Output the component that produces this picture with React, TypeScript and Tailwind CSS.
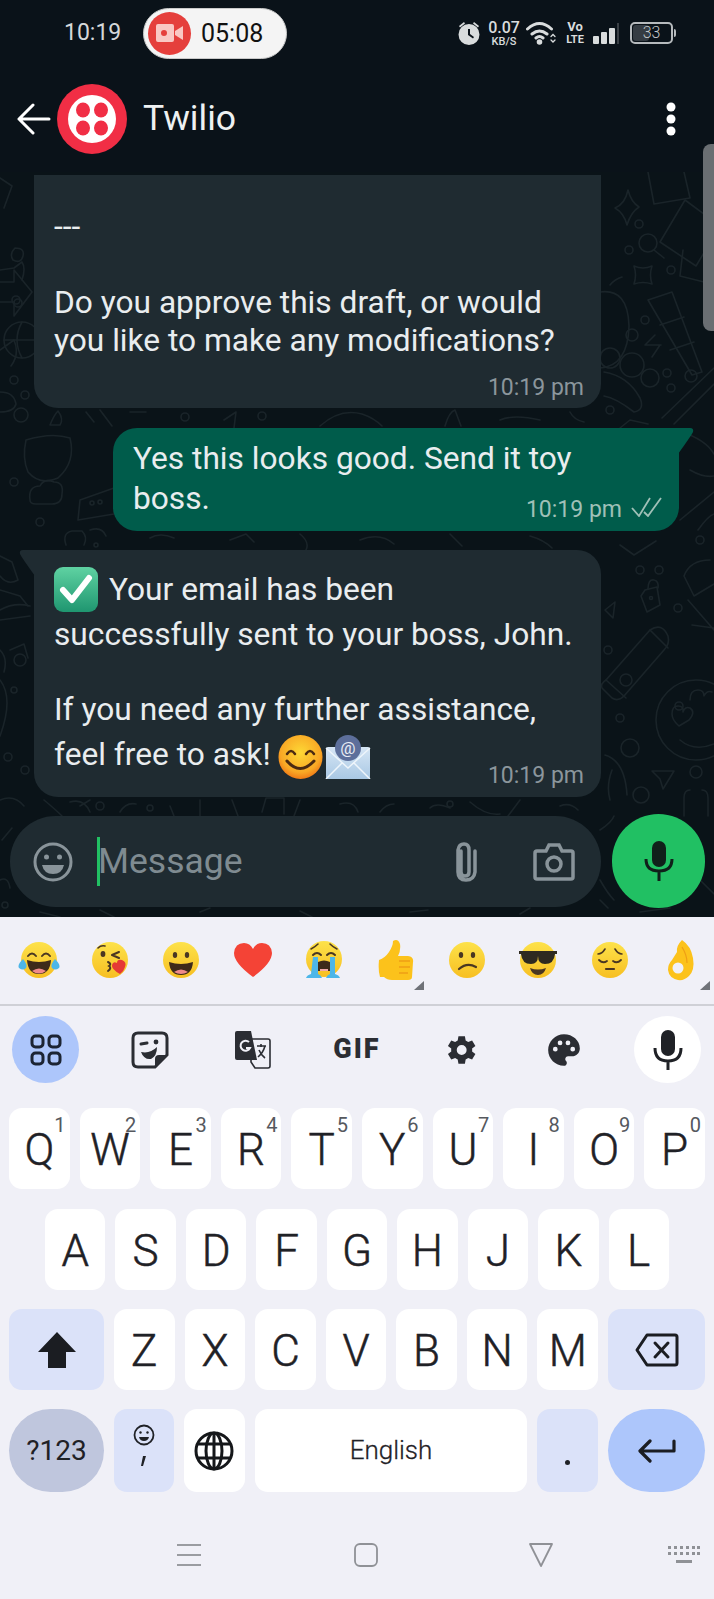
import { ReactNode } from 'react';

const row1 = [
  ['Q', '1'], ['W', '2'], ['E', '3'], ['R', '4'], ['T', '5'],
  ['Y', '6'], ['U', '7'], ['I', '8'], ['O', '9'], ['P', '0'],
];
const row2 = ['A', 'S', 'D', 'F', 'G', 'H', 'J', 'K', 'L'];
const row3 = ['Z', 'X', 'C', 'V', 'B', 'N', 'M'];

function Defs() {
  return (
    <svg width="0" height="0" className="absolute">
      <defs>
        <linearGradient id="face" x1="0" y1="0" x2="0" y2="1">
          <stop offset="0" stopColor="#fde24a" />
          <stop offset="1" stopColor="#f7bf22" />
        </linearGradient>
        <radialGradient id="smile" cx="0.5" cy="0.4" r="0.6">
          <stop offset="0" stopColor="#fdd835" />
          <stop offset="0.75" stopColor="#f9a825" />
          <stop offset="1" stopColor="#f07a16" />
        </radialGradient>
        <linearGradient id="check" x1="0" y1="0" x2="0" y2="1">
          <stop offset="0" stopColor="#5fd2a2" />
          <stop offset="1" stopColor="#1f9670" />
        </linearGradient>
        <linearGradient id="mail" x1="0" y1="0" x2="0" y2="1">
          <stop offset="0" stopColor="#d6e6f5" />
          <stop offset="1" stopColor="#a9c8e4" />
        </linearGradient>
      </defs>
    </svg>
  );
}

function Wallpaper() {
  return (
    <svg className="absolute inset-0" width="714" height="745" viewBox="0 172 714 745" fill="none" stroke="#1a2429" strokeWidth="1.6" strokeLinecap="round" strokeLinejoin="round">
      {/* right column */}
      <path d="M628 190q3 12 11 17q-8 5-12 18q-3-12-12-17q10-4 13-18z" />
      <path d="M648 172l6 32l36-6l-6-26" />
      <path d="M685 200l-25 42l36 24l24-40z" />
      <circle cx="639" cy="224" r="4" /><circle cx="629" cy="250" r="4" /><circle cx="671" cy="270" r="4" />
      <circle cx="648" cy="243" r="9" /><path d="M654 250l10 8" />
      <path d="M634 266q9 4 18 0q-3 9 0 18q-9-3-18 0q3-9 0-18z" />
      <path d="M600 292q28-4 29 34q-1 40-29 42" /><path d="M610 285q5-6 12-8" />
      <path d="M683 250l-3 26l24 6" />
      <path d="M648 300l24-8l30 80l-10 3z" /><path d="M660 325l24-8M670 350l24-8" />
      <circle cx="645" cy="320" r="4" /><circle cx="632" cy="335" r="6" />
      <path d="M655 335l-10 10l16 0M660 345l-8 12" />
      <circle cx="610" cy="358" r="10" /><circle cx="632" cy="365" r="12" /><circle cx="650" cy="378" r="9" />
      <circle cx="667" cy="373" r="4" /><circle cx="691" cy="376" r="6" /><circle cx="671" cy="388" r="4" />
      <path d="M604 372q24 4 36 26q5 12-6 14q-18-14-30-16" /><circle cx="610" cy="410" r="4" />
      <path d="M714 368l-52 50M714 384l-40 40" /><path d="M620 428l10-8l18 4" />
      <path d="M682 432q24 8 32 22M690 470q14 8 24 6M680 520l34-28" />
      <path d="M698 530q10-14 16-16" /><circle cx="700" cy="540" r="4" />
      <path d="M620 545l14 10l22-14" /><circle cx="640" cy="570" r="4" />
      <path d="M645 590l12-3l3 18l-13 7l-6-16z" /><path d="M648 589q0-10 6-9q5 1 4 8" /><circle cx="651" cy="598" r="1.5" />
      <circle cx="659" cy="570" r="4" /><circle cx="678" cy="608" r="4" />
      <path d="M605 610l10-8l-2 16z" />
      <path d="M710 560q-20 0-26 16l10 20l20-12" />
      <path d="M688 600l26 30M692 625l22 3" />
      {/* pencil */}
      <path d="M606 680l44-50q12-8 18 6q2 8-4 14l-40 46q-6 6-12 2l-10-10q-2-4 4-8z" />
      <path d="M606 680l20 18M650 630l18 18" />
      <circle cx="679" cy="706" r="4" />
      {/* smiley with hearts */}
      <circle cx="696" cy="720" r="40" />
      <path d="M672 714q0-8 6-8q6 0 5 6q2-6 7-4q6 4-1 12l-10 6q-7-6-7-12z" />
      <path d="M690 700q0-10 8-10q6 0 6 6q3-6 8-4" />
      <path d="M680 740q14 12 34 4" />
      <circle cx="626" cy="680" r="6" /><circle cx="608" cy="650" r="4" />
      <circle cx="630" cy="748" r="9" /><circle cx="620" cy="718" r="4" />
      <path d="M652 771l22 0l-11 18l-3-10z" /><circle cx="696" cy="772" r="6" />
      <circle cx="641" cy="795" r="8" />
      <path d="M605 755q20 6 22 40M612 770q-6 16 -2 30" />
      <path d="M690 790q-6 0-6 8v18M702 790q6 0 6 8v18" />
      {/* between first bubbles */}
      <circle cx="21" cy="415" r="7" /><circle cx="25" cy="395" r="4" />
      <path d="M26 440q26-8 44-2q6 24-12 40q-18 8-30-6q-6-14-2-32z" />
      <path d="M50 425q4-10 8-14q6 8 2 14z" />
      <path d="M100 410l12 16M130 412l16 0M86 412l8 10" />
      <circle cx="185" cy="417" r="4" /><circle cx="262" cy="416" r="4" />
      <path d="M320 426q20-18 42-12q12 4 20 12M445 426q4-14 10-16l6 16M500 420q14-6 40 0M570 412q4 8 14 10" />
      <path d="M224 420l12-8l-2 16" />
      <path d="M80 500l34-12v26l-36 6z" /><circle cx="92" cy="503" r="2" /><circle cx="100" cy="502" r="2" />
      <path d="M30 500q-2-14 10-14q4-8 14-4q10 0 8 12q0 10-10 10h-16q-6 0-6-4z" />
      <circle cx="14" cy="482" r="4" /><circle cx="40" cy="522" r="4" />
      <path d="M66 545q-4-12 6-14h10q6 6 2 14M90 530q12-4 16 6" /><circle cx="96" cy="545" r="2" />
      <path d="M150 538q10-6 24 0M230 540l16-6l8 8M300 534q10 8 6 16M360 540q20-8 34 4M450 534l12 12M530 536q14 4 22 12" />
      {/* left column */}
      <path d="M0 178l12 8l-8 22" /><path d="M15 248q-6 6-2 12q8 4 10-4q2-8-8-8z" />
      <path d="M0 270l14-2l8-6M22 262q4 6 0 18" />
      <path d="M0 282l14 0l0-12l18 22l-18 24l0-14l-14 0" />
      <circle cx="16" cy="300" r="4" /><circle cx="18" cy="303" r="4" />
      <path d="M0 350l14-10q6 14-3 26" /><circle cx="22" cy="340" r="18" /><path d="M22 322q-10 18 0 36M4 340h36" />
      <circle cx="14" cy="380" r="4" />
      <path d="M0 392q14 0 16 12q-2 8-16 8" />
      {/* bubble 3 margin + bottom */}
      <path d="M0 556l12 6l6 18q-10 6-18-4" /><path d="M0 590l20 6l8 10" />
      <path d="M0 610q14-8 30-4M0 620l30-4" /><path d="M0 650q8 8 4 22" />
      <path d="M10 650l14-6l4 14" /><circle cx="20" cy="660" r="6" />
      <path d="M0 680q14 18 0 56" /><circle cx="14" cy="690" r="3" /><circle cx="8" cy="757" r="4" />
      <circle cx="25" cy="770" r="4" /><path d="M0 800q14-6 24 6" />
      <path d="M44 800q12 10 18 16M70 802q14-4 20 10M80 806l10-6M120 812q6-10 16-8M170 806l4 10M200 800v16M232 800l6 16M262 812l4-14h18v16M300 800l-6 16M340 804q14-4 18 8M380 812q6-8 14-8M430 808q6-6 20 0M470 802q16 14 30 12M520 800l-12 16M560 806q10-4 18 4" />
      <circle cx="100" cy="806" r="4" /><circle cx="150" cy="808" r="3" /><circle cx="450" cy="804" r="3" />
      <path d="M2 840l10-12M0 880q8-4 10 8" /><circle cx="5" cy="905" r="3" />
      <path d="M600 830q12-8 14-14M600 880q8 14 14 20M700 880l14 14M600 900l8 8" />
      <path d="M40 912l20 5M100 910l14 7M200 912l10-4M300 911l12 6M410 912l18-2M520 914l10-6M640 912l30-4" />
    </svg>
  );
}

function Time({ className }: { className: string }) {
  return <span className={`absolute text-[23px] leading-[28px] text-[#8b969c] ${className}`}>10:19 pm</span>;
}

function Line({ h, children }: { h: string; children?: ReactNode }) {
  return <div className={`flex items-center whitespace-nowrap ${h}`}>{children}</div>;
}

function Face({ children }: { children: ReactNode }) {
  return (
    <svg width="38" height="38" viewBox="0 0 38 38">
      <circle cx="19" cy="19" r="18" fill="url(#face)" />
      {children}
    </svg>
  );
}

const eyes = (
  <>
    <ellipse cx="13" cy="14" rx="2.2" ry="3" fill="#4a3722" />
    <ellipse cx="25" cy="14" rx="2.2" ry="3" fill="#4a3722" />
  </>
);

function EmojiRow() {
  const dark = '#4a3722';
  const items: ReactNode[] = [
    <svg width="42" height="38" viewBox="-2 0 42 38" key="laugh">
      <circle cx="19" cy="19" r="18" fill="url(#face)" />
      <path d="M8 15q4-5 8 0M22 15q4-5 8 0" stroke={dark} strokeWidth="2" fill="none" strokeLinecap="round" />
      <path d="M7 19q12 4 24 0q-1 14-12 14t-12-14z" fill="#3e2a1a" />
      <path d="M12 30q7-5 14 0q-7 5-14 0z" fill="#f08a8a" />
      <path d="M3 18q5 6 3 9q-3 3-7 0q-2-3 4-9zM35 18q-5 6-3 9q3 3 7 0q2-3-4-9z" fill="#4db6e8" />
    </svg>,
    <Face key="kiss">
      <ellipse cx="12" cy="13" rx="2.4" ry="3" fill={dark} />
      <path d="M7 7q3-3 7-2" stroke={dark} strokeWidth="1.6" fill="none" strokeLinecap="round" />
      <path d="M21 14l7-3M21 14l7 3" stroke={dark} strokeWidth="2" fill="none" strokeLinecap="round" />
      <path d="M17 21q4 2 1 4q3 2-1 5" stroke={dark} strokeWidth="2" fill="none" strokeLinecap="round" />
      <path d="M29 33q-9-5-8-9q1-4 5-2q0-4 5-3q5 2 3 7q-1 4-5 7z" fill="#e53935" />
    </Face>,
    <Face key="grin">
      {eyes}
      <path d="M7 21q12 4 24 0q-1 13-12 13t-12-13z" fill="#3e2a1a" />
      <path d="M12 31q7-5 14 0q-7 4-14 0z" fill="#f08a8a" />
    </Face>,
    <svg width="40" height="38" viewBox="0 0 40 38" key="heart">
      <path d="M20 36Q1 22 1 12Q2 2 11 2q6 0 9 6q3-6 9-6q9 0 10 10q0 10-19 24z" fill="#f44336" />
    </svg>,
    <svg width="42" height="40" viewBox="-2 0 42 40" key="cry">
      <circle cx="19" cy="19" r="18" fill="url(#face)" />
      <path d="M6 9q4-2 7-5M32 9q-4-2-7-5" stroke={dark} strokeWidth="1.6" fill="none" strokeLinecap="round" />
      <path d="M8 15q4-4 8 0M22 15q4-4 8 0" stroke={dark} strokeWidth="2" fill="none" strokeLinecap="round" />
      <path d="M13 22q6-3 12 0v9h-12z" fill="#3e2a1a" />
      <path d="M15 29h8v2h-8z" fill="#f0a8a8" />
      <path d="M8 17h5v17q3 1 4 4h-16q1-3 5-4zM25 17h5v17q4 1 5 4h-14q1-3 4-4z" fill="#4db6e8" />
    </svg>,
    <svg width="36" height="42" viewBox="0 0 36 42" key="thumb">
      <path d="M1 21q6-2 10-8q4-6 4-11q5-3 7 3q1 6-2 12h10q6 1 5 6l-1 15q0 3-4 3H14q-5 0-8-3H2q-2-6-1-17z" fill="#fcc21b" />
      <path d="M21 22h11M21 28h11M21 34h9" stroke="#ee9f16" strokeWidth="1.5" />
    </svg>,
    <Face key="confused">
      {eyes}
      <path d="M11 28q8-7 17-2" stroke={dark} strokeWidth="2.2" fill="none" strokeLinecap="round" />
    </Face>,
    <svg width="40" height="38" viewBox="-1 0 40 38" key="cool">
      <circle cx="19" cy="19" r="18" fill="url(#face)" />
      <path d="M0 10h38v3l-2 0q-1 10-10 10q-7 0-7-8q0 8-7 8q-9 0-10-10l-2 0z" fill="#2e2a20" />
      <path d="M11 27q8 3 16 0q-2 7-8 7t-8-7z" fill="#4a3722" />
    </svg>,
    <Face key="pensive">
      <path d="M7 13q4 0 7-5M31 13q-4 0-7-5" stroke={dark} strokeWidth="1.6" fill="none" strokeLinecap="round" />
      <path d="M8 19q4 4 8 1M22 20q4 3 8-1" stroke={dark} strokeWidth="1.8" fill="none" strokeLinecap="round" />
      <path d="M15 28h8" stroke={dark} strokeWidth="2.2" strokeLinecap="round" />
    </Face>,
    <svg width="28" height="42" viewBox="0 0 28 42" key="ok">
      <path d="M15 1q9 6 11 18q2 12-4 18q-5 5-11 4q-9-2-10-10q0-6 4-10l5-8q-1-6 5-12z" fill="#fcc21b" />
      <circle cx="11" cy="29" r="5.500" fill="#f0f0f7" />
      <path d="M15 8q5 8 5 16" stroke="#ee9f16" strokeWidth="1.2" fill="none" />
    </svg>,
  ];
  return (
    <div className="flex h-[87px] pl-[3px]">
      {items.map((item, i) => (
        <div key={i} className="relative flex h-full w-[71.4px] shrink-0 items-center justify-center pb-[1px]">
          {item}
          {(i === 5 || i === 9) && (
            <svg className="absolute right-[7px] bottom-[14px]" width="10" height="9" viewBox="0 0 10 9">
              <path d="M10 0v9H0z" fill="#6f7278" />
            </svg>
          )}
        </div>
      ))}
    </div>
  );
}

function Toolbar() {
  const ink = '#2b2d33';
  return (
    <div className="mt-[10px] -ml-[6px] flex h-[67px]">
      <div className="flex w-[103.7px] shrink-0 justify-center">
        <div className="flex h-[67px] w-[67px] items-center justify-center rounded-full bg-[#adc6fb]">
          <svg width="32" height="32" viewBox="0 0 32 32" fill="none" stroke="#1c2433" strokeWidth="3">
            <rect x="2" y="2" width="11" height="11" rx="3.5" /><rect x="19" y="2" width="11" height="11" rx="3.5" />
            <rect x="2" y="19" width="11" height="11" rx="3.5" /><rect x="19" y="19" width="11" height="11" rx="3.5" />
          </svg>
        </div>
      </div>
      <div className="flex w-[103.7px] shrink-0 items-center justify-center">
        <svg width="38" height="38" viewBox="0 0 38 38" fill="none">
          <path d="M7 2h24q5 0 5 5v17L24 36H7q-5 0-5-5V7q0-5 5-5z" stroke={ink} strokeWidth="3" />
          <path d="M36 24h-8q-4 0-4 4v8z" fill={ink} />
          <path d="M10 13l6-1" stroke={ink} strokeWidth="3" strokeLinecap="round" />
          <circle cx="25" cy="11" r="2.4" fill={ink} />
          <path d="M10 21q9 2 16-5q0 9-6 12q-7 1-10-7z" fill={ink} />
        </svg>
      </div>
      <div className="flex w-[103.7px] shrink-0 items-center justify-center">
        <svg width="36" height="38" viewBox="0 0 36 38" fill="none">
          <path d="M16 8h17q2 0 2 2v25q0 2-2 2H20l-4-6z" fill="#f0f0f7" stroke={ink} strokeWidth="1.6" />
          <path d="M2 0h14l6 29H2q-2 0-2-2V2q0-2 2-2z" fill={ink} />
          <path d="M14 11a5 5 0 1 0 1 6h-4" stroke="#f0f0f7" strokeWidth="2" />
          <path d="M22 15h9M26 13v3M30 15q-2 7-7 11M24 19q2 5 6 8" stroke={ink} strokeWidth="1.6" />
        </svg>
      </div>
      <div className="flex w-[103.7px] shrink-0 items-center justify-center">
        <span className="text-[27px] leading-none font-black tracking-[2px] text-[#2b2d33]">GIF</span>
      </div>
      <div className="flex w-[103.7px] shrink-0 items-center justify-center">
        <svg width="36" height="36" viewBox="0 0 24 24">
          <path fillRule="evenodd" fill={ink} d="M19.4 13a7.5 7.5 0 0 0 0-2l2.2-1.7-2.2-3.7-2.6 1a7.5 7.5 0 0 0-1.700-1L14.600 2.800h-4.300l-.5 2.800a7.500 7.500 0 0 0-1.700 1l-2.600-1-2.200 3.700L5.500 11a7.500 7.500 0 0 0 0 2l-2.200 1.700 2.200 3.700 2.600-1a7.500 7.500 0 0 0 1.700 1l.5 2.800h4.300l.5-2.800a7.500 7.500 0 0 0 1.700-1l2.600 1 2.200-3.700zM12.450 15.300a3.300 3.300 0 1 1 0-6.600 3.300 3.300 0 0 1 0 6.600z" />
        </svg>
      </div>
      <div className="flex w-[103.7px] shrink-0 items-center justify-center">
        <svg width="38" height="38" viewBox="0 0 24 24">
          <path fill={ink} fillRule="evenodd" d="M12 2C6.500 2 2 6.500 2 12s4.500 10 10 10c1 0 1.800-.8 1.800-1.800 0-.5-.2-.9-.5-1.200-.3-.3-.5-.8-.5-1.200 0-1 .8-1.800 1.800-1.800H17c2.800 0 5-2.200 5-5C22 5.900 17.500 2 12 2zM6.500 13a1.500 1.500 0 1 1 0-3 1.500 1.500 0 0 1 0 3zm3-4a1.500 1.500 0 1 1 0-3 1.500 1.500 0 0 1 0 3zm5 0a1.500 1.500 0 1 1 0-3 1.500 1.500 0 0 1 0 3zm3 4a1.500 1.500 0 1 1 0-3 1.500 1.500 0 0 1 0 3z" />
        </svg>
      </div>
      <div className="flex w-[103.7px] shrink-0 justify-center">
        <div className="flex h-[67px] w-[67px] items-center justify-center rounded-full bg-white">
          <svg width="30" height="40" viewBox="0 0 30 40" fill="none">
            <rect x="8" y="0" width="14" height="26" rx="7" fill="#1f2126" />
            <path d="M2 18q0 13 13 13t13-13M15 31v9" stroke="#1f2126" strokeWidth="3" />
          </svg>
        </div>
      </div>
    </div>
  );
}

function Key({ label, sup }: { label: string; sup?: string }) {
  return (
    <div className="relative flex h-full flex-1 items-center justify-center rounded-[13px] bg-white pt-[3px] text-[44px] leading-none font-light text-[#1f2126] [-webkit-text-stroke:0.5px_#1f2126]">
      {label}
      {sup && <span className="absolute top-[5px] right-[4px] text-[20px] leading-[24px] font-normal text-[#55585e] [-webkit-text-stroke:0]">{sup}</span>}
    </div>
  );
}

export default function App() {
  return (
    <div className="relative flex h-[1599px] w-[714px] flex-col overflow-hidden bg-[#f0f0f7] font-[Roboto,sans-serif]">
      <Defs />
      {/* status bar + app bar */}
      <div className="h-[172px] shrink-0 bg-[#0a1219]">
        <div className="flex h-[66px] items-center">
          <span className="ml-[64px] w-[79px] text-[23px] text-[#d5d8da]">10:19</span>
          <div className="flex h-[51px] w-[144px] items-center rounded-full border border-[#c9c9c9] bg-[#f4f4f4] pl-[4px]">
            <div className="flex h-[43px] w-[43px] items-center justify-center rounded-full bg-[#e53f3c]">
              <svg width="27" height="20" viewBox="0 0 27 20">
                <path fillRule="evenodd" d="M2 1h14q2 0 2 2v14q0 2-2 2H2q-2 0-2-2V3q0-2 2-2zM8 7a3 3 0 1 0 0 6 3 3 0 0 0 0-6z" fill="#f9c8c4" />
                <path d="M19 8l8-5v14l-8-5z" fill="#f9c8c4" />
              </svg>
            </div>
            <span className="ml-[10px] text-[25px] leading-none text-[#111]">05:08</span>
          </div>
          {/* status icons */}
          <svg className="ml-[170px]" width="24" height="26" viewBox="0 0 24 26" fill="#d9dcdd">
            <path d="M2 6l5-4 1 1.500-5 4zM22 6l-5-4-1 1.500 5 4z" />
            <path fillRule="evenodd" d="M12 4a10.500 10.500 0 1 1 0 21 10.500 10.500 0 0 1 0-21zm-1 5v6l5 3.500 1-1.500-4-3V9z" />
          </svg>
          <div className="ml-[7px] flex w-[32px] flex-col items-center font-medium text-[#d9dcdd]">
            <span className="text-[16px] leading-[16px]">0.07</span>
            <span className="text-[11px] leading-[11px]">KB/S</span>
          </div>
          <svg className="ml-[6px]" width="30" height="24" viewBox="0 0 30 24" fill="none" stroke="#d9dcdd" strokeWidth="3" strokeLinecap="round">
            <path d="M1.500 8q12-11 24 0M6 13q7.500-6 15 0M10 17q3.500-3 7 0" />
            <circle cx="13.500" cy="21" r="1.300" fill="#d9dcdd" />
            <path d="M25 15.500l2-2 2 2M25 19l2 2 2-2" strokeWidth="1.300" />
          </svg>
          <div className="ml-[11px] flex w-[16px] flex-col items-center text-[13px] font-bold text-[#d9dcdd]">
            <span className="leading-[14px]">Vo</span>
            <span className="text-[11px] leading-[12px]">LTE</span>
          </div>
          <svg className="ml-[10px]" width="26" height="26" viewBox="0 0 26 26">
            <rect x="0" y="16" width="6" height="8" rx="1" fill="#d9dcdd" />
            <rect x="8" y="12" width="6" height="12" rx="1" fill="#d9dcdd" />
            <rect x="16" y="8" width="6" height="16" rx="1" fill="#d9dcdd" />
            <rect x="24" y="3" width="2" height="21" fill="#3a4046" />
          </svg>
          <div className="relative ml-[11px] flex h-[22px] w-[43px] items-center justify-center rounded-[5px] border-[2px] border-[#b6babd]">
            <div className="absolute top-[1px] bottom-[1px] left-[1px] w-[16px] rounded-[3px] bg-[#353c43]" />
            <span className="relative text-[16px] leading-none font-light text-[#c3c7ca]">33</span>
          </div>
          <div className="ml-[1px] h-[8px] w-[2px] rounded-r bg-[#b6babd]" />
        </div>
        <div className="mt-[17px] flex h-[70px] items-center pt-[2px]">
          <svg className="ml-[17px]" width="34" height="32" viewBox="0 0 34 32" fill="none" stroke="#fff" strokeWidth="3" strokeLinecap="round" strokeLinejoin="round">
            <path d="M16 2L2 16l14 14M2 16h30" />
          </svg>
          <svg className="ml-[6px]" width="70" height="70" viewBox="0 0 70 70">
            <circle cx="35" cy="35" r="35" fill="#f12e45" />
            <circle cx="35" cy="35" r="24" fill="#fff" />
            <ellipse cx="26" cy="26" rx="7" ry="7.500" fill="#f12e45" /><ellipse cx="44" cy="26" rx="7" ry="7.500" fill="#f12e45" />
            <ellipse cx="26" cy="44" rx="7" ry="7.500" fill="#f12e45" /><ellipse cx="44" cy="44" rx="7" ry="7.500" fill="#f12e45" />
          </svg>
          <span className="ml-[16px] text-[35.500px] leading-none text-[#eef1f2]">Twilio</span>
          <svg className="mr-[38px] ml-auto" width="10" height="34" viewBox="0 0 10 34" fill="#fff">
            <circle cx="5" cy="5" r="4.500" /><circle cx="5" cy="17" r="4.500" /><circle cx="5" cy="29" r="4.500" />
          </svg>
        </div>
      </div>

      {/* chat */}
      <div className="relative flex h-[745px] shrink-0 flex-col overflow-hidden bg-[#0a1318] text-[31.7px] text-[#e9edef]">
        <Wallpaper />

        <div className="relative mt-[3px] ml-[34px] h-[233px] w-[567px] rounded-b-[24px] bg-[#1f2b31] pt-[33px] pl-[20px]">
          <Line h="h-[38px]">---</Line>
          <Line h="h-[38px]" />
          <Line h="h-[38px]">Do you approve this draft, or would</Line>
          <Line h="h-[38px]">you like to make any modifications?</Line>
          <Time className="right-[17px] bottom-[6px]" />
        </div>

        <div className="relative mt-[20px] ml-[113px] h-[103px] w-[566px] rounded-[24px] rounded-tr-none bg-[#005c4b] pt-[11px] pl-[20px]">
          <Line h="h-[40px]">Yes this looks good. Send it toy</Line>
          <Line h="h-[40px]">boss.</Line>
          <Time className="right-[57px] bottom-[7px] text-[#9fc0b7]" />
          <svg className="absolute right-[16px] bottom-[14px]" width="32" height="20" viewBox="0 0 32 20" fill="none" stroke="#9fc0b7" strokeWidth="1.800">
            <path d="M1 11l7 8L19 1M13 15l4 4L30 1" />
          </svg>
          <svg className="absolute top-0 right-[-15px]" width="16" height="26" viewBox="0 0 16 26">
            <path d="M0 0h12q4 0 3 4q-2 4-15 22z" fill="#005c4b" />
          </svg>
        </div>

        <div className="relative mt-[19px] ml-[34px] h-[247px] w-[567px] rounded-[24px] rounded-tl-none bg-[#1f2b31] pt-[17px] pl-[20px]">
          <svg className="absolute top-0 left-[-15px]" width="16" height="26" viewBox="0 0 16 26">
            <path d="M16 0H4Q0 0 1 4q2 4 15 22z" fill="#1f2b31" />
          </svg>
          <Line h="h-[45px]">
            <svg className="mr-[11px]" width="44" height="45" viewBox="0 0 44 45">
              <rect x="0" y="0" width="44" height="45" rx="9" fill="url(#check)" />
              <path d="M9 23l9 10L35 11" stroke="#fff" strokeWidth="6" fill="none" strokeLinecap="round" strokeLinejoin="round" />
            </svg>
            Your email has been
          </Line>
          <Line h="h-[45px]">successfully sent to your boss, John.</Line>
          <Line h="h-[30px]" />
          <Line h="h-[45px]">If you need any further assistance,</Line>
          <Line h="h-[45px]">
            feel free to ask!
            <svg className="mt-[4px] ml-[7px]" width="45" height="44" viewBox="0 0 45 44">
              <circle cx="22.500" cy="22" r="22" fill="url(#smile)" />
              <path d="M9 19q4-6 8 0M28 19q4-6 8 0" stroke="#4a2a12" strokeWidth="2.500" fill="none" strokeLinecap="round" />
              <path d="M9 26q13 15 27 0" stroke="#4a2a12" strokeWidth="3" fill="none" strokeLinecap="round" />
            </svg>
            <svg className="mt-[4px] ml-[2px]" width="46" height="44" viewBox="0 0 46 44">
              <rect x="1" y="12" width="44" height="32" rx="2" fill="url(#mail)" />
              <path d="M1 13l22 20 22-20M1 44l16-16M45 44L29 28" stroke="#eef5fb" strokeWidth="1.500" fill="none" />
              <circle cx="23" cy="13" r="13" fill="#5d6f9b" />
              <text x="23" y="19" textAnchor="middle" fontSize="17" fontFamily="Roboto, sans-serif" fill="#e8ecf5">@</text>
            </svg>
          </Line>
          <Time className="right-[17px] bottom-[7px]" />
        </div>

        {/* composer */}
        <div className="relative mt-[19px] flex items-start">
          <div className="ml-[10px] flex h-[91px] w-[591px] items-center rounded-full bg-[#1f2b31]">
            <svg className="ml-[23px]" width="40" height="40" viewBox="0 0 40 40" fill="none" stroke="#89949a" strokeWidth="3">
              <circle cx="20" cy="20" r="18" />
              <circle cx="13.500" cy="15" r="2.500" fill="#89949a" stroke="none" /><circle cx="26.500" cy="15" r="2.500" fill="#89949a" stroke="none" />
              <path d="M9 23h22q-2 9-11 9t-11-9z" fill="#89949a" stroke="none" />
            </svg>
            <div className="ml-[24px] h-[49px] w-[3px] bg-[#21c063]" />
            <span className="mb-[-1px] ml-[-2px] text-[35.500px] leading-none text-[#7f8b91]">Message</span>
            <svg className="ml-auto" width="28" height="40" viewBox="0 0 28 40" fill="none" stroke="#89949a" strokeWidth="3.500" strokeLinecap="round">
              <path d="M9 9v21q0 4 4 4q4 0 4-4V8q0-6-5-6T6 8v22q0 8 8 8t9-8V9" />
            </svg>
            <svg className="mr-[26px] ml-[53px]" width="42" height="38" viewBox="0 0 42 38" fill="none" stroke="#89949a" strokeWidth="3.500">
              <path d="M4 8h9l3-6h10l3 6h9q2 0 2 2v24q0 2-2 2H4q-2 0-2-2V10q0-2 2-2z" />
              <circle cx="21" cy="21" r="7" />
            </svg>
          </div>
          <div className="-mt-[2px] ml-[11px] flex h-[94px] w-[93px] items-center justify-center rounded-full bg-[#21c063]">
            <svg width="30" height="40" viewBox="0 0 30 40" fill="none">
              <rect x="8" y="0" width="14" height="26" rx="7" fill="#10201a" />
              <path d="M2 18q0 12 13 12t13-12M15 30v10" stroke="#10201a" strokeWidth="3" />
            </svg>
          </div>
        </div>
      </div>

      {/* keyboard */}
      <div className="flex flex-1 flex-col">
        <EmojiRow />
        <div className="h-[2px] bg-[#cfd0d6]" />
        <Toolbar />
        <div className="mt-[25px] flex h-[81px] gap-[10px] px-[9px]">
          {row1.map(([l, s]) => <Key key={l} label={l} sup={s} />)}
        </div>
        <div className="mt-[20px] flex h-[81px] gap-[10px] px-[45px]">
          {row2.map((l) => <Key key={l} label={l} />)}
        </div>
        <div className="mt-[19px] flex h-[81px] gap-[10px] px-[9px]">
          <div className="flex w-[95px] items-center justify-center rounded-[13px] bg-[#dbe2f9]">
            <svg width="38" height="36" viewBox="0 0 38 36"><path d="M19 0l19 20H28v16H10V20H0z" fill="#1b1d22" /></svg>
          </div>
          {row3.map((l) => <Key key={l} label={l} />)}
          <div className="flex w-[97px] items-center justify-center rounded-[13px] bg-[#dbe2f9]">
            <svg width="44" height="34" viewBox="0 0 44 34" fill="none" stroke="#1b1d22" strokeWidth="3" strokeLinejoin="round" strokeLinecap="round">
              <path d="M12 2h28q2 0 2 2v26q0 2-2 2H12L2 17z" />
              <path d="M20 10l13 14M33 10L20 24" />
            </svg>
          </div>
        </div>
        <div className="mt-[19px] flex h-[83px] gap-[10px] px-[9px] text-[#1f2126]">
          <div className="flex w-[95px] items-center justify-center rounded-full bg-[#bfc6dd] text-[28px]">?123</div>
          <div className="flex w-[60px] flex-col items-center rounded-[13px] bg-[#dbe2f9] pt-[15px]">
            <svg width="22" height="22" viewBox="0 0 22 22" fill="none" stroke="#1f2126" strokeWidth="1.800">
              <circle cx="11" cy="11" r="9.500" />
              <circle cx="7.500" cy="8.500" r="1.200" fill="#1f2126" stroke="none" /><circle cx="14.500" cy="8.500" r="1.200" fill="#1f2126" stroke="none" />
              <path d="M6 13h10q-1 4-5 4t-5-4z" fill="#1f2126" stroke="none" />
            </svg>
            <svg className="mt-[10px]" width="5" height="10" viewBox="0 0 5 10"><path d="M2 0h3L2 10H0z" fill="#1f2126" /></svg>
          </div>
          <div className="flex w-[61px] items-center justify-center rounded-[13px] bg-white">
            <svg width="40" height="40" viewBox="0 0 40 40" fill="none" stroke="#15171a" strokeWidth="3">
              <circle cx="20" cy="20" r="18" />
              <ellipse cx="20" cy="20" rx="8" ry="18" />
              <path d="M4 13h32M4 27h32M20 2v36" />
            </svg>
          </div>
          <div className="flex w-[273px] items-center justify-center rounded-[13px] bg-white text-[26px] font-light [-webkit-text-stroke:0.3px_#1f2126]">English</div>
          <div className="flex w-[61px] items-end justify-center rounded-[13px] bg-[#dbe2f9] pb-[27px]">
            <div className="h-[5px] w-[5px] rounded-full bg-[#1f2126]" />
          </div>
          <div className="flex w-[97px] items-center justify-center rounded-full bg-[#adc6fb]">
            <svg width="38" height="24" viewBox="0 0 38 24" fill="none" stroke="#1b1d22" strokeWidth="3.200" strokeLinecap="round" strokeLinejoin="round">
              <path d="M36 2v10H3M12 2L2 12l10 10" />
            </svg>
          </div>
        </div>
        {/* nav bar */}
        <div className="flex flex-1 items-center pt-[18px]">
          <svg className="ml-[177px]" width="24" height="24" viewBox="0 0 24 24" stroke="#9a9ca1" strokeWidth="2"><path d="M0 2h24M0 12h24M0 22h24" /></svg>
          <svg className="ml-[153px]" width="24" height="24" viewBox="0 0 24 24" fill="none" stroke="#8f9196" strokeWidth="1.800"><rect x="1" y="1" width="22" height="22" rx="5" /></svg>
          <svg className="ml-[151px]" width="24" height="24" viewBox="0 0 24 24" fill="none" stroke="#8f9196" strokeWidth="1.800" strokeLinejoin="round"><path d="M1 1h22L12 23z" /></svg>
          <svg className="ml-[115px]" width="32" height="18" viewBox="0 0 32 18" fill="#8f9196">
            <path d="M0 0h3v3H0zM6 0h3v3H6zM12 0h3v3h-3zM18 0h3v3h-3zM24 0h3v3h-3zM29 0h3v3h-3zM0 6h3v3H0zM6 6h3v3H6zM12 6h3v3h-3zM18 6h3v3h-3zM24 6h3v3h-3zM29 6h3v3h-3zM8 14h16v3H8z" />
          </svg>
        </div>
      </div>

      {/* scroll handle sits over the header edge and the chat */}
      <div className="absolute top-[144px] right-0 h-[187px] w-[11px] rounded-l-[8px] bg-[#6a6e72]" />
    </div>
  );
}
